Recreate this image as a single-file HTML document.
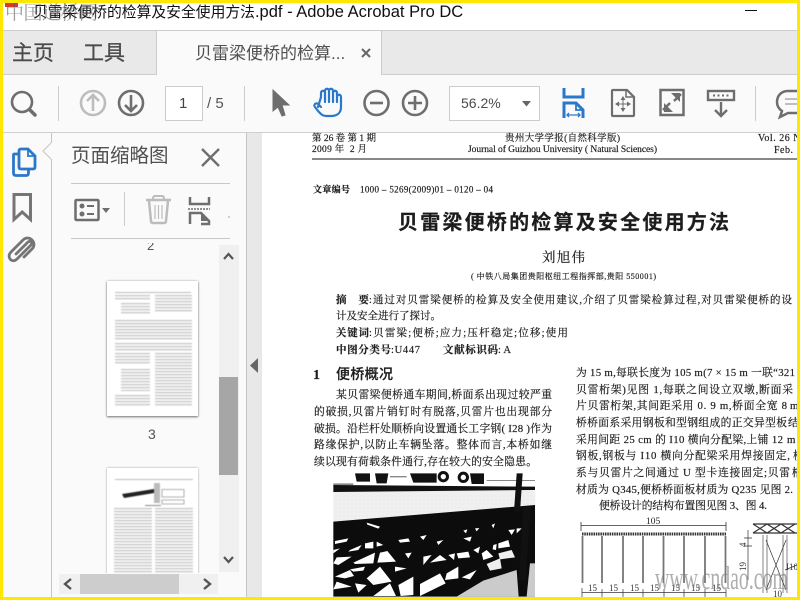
<!DOCTYPE html>
<html lang="zh"><head><meta charset="utf-8"><title>贝雷梁便桥的检算及安全使用方法.pdf - Adobe Acrobat Pro DC</title>
<style>
html,body{margin:0;padding:0}
body{width:800px;height:600px;overflow:hidden;position:relative;background:#fff;font-family:"Liberation Sans","Noto Sans CJK SC",sans-serif}
.a{position:absolute}
.t{position:absolute;white-space:nowrap;line-height:1}
svg{position:absolute;overflow:visible}
.g{fill:none;stroke:#6e6e6e;stroke-width:2.6}
.b{fill:none;stroke:#2b78c9;stroke-width:2.2}
.lines{position:absolute;opacity:.55;background:repeating-linear-gradient(#8e8e8e 0 1px,#e2e2e2 1px 2px,#fff 2px 3px)}
.tb{position:absolute;left:0;top:0;width:91px;height:135px;filter:blur(.5px)}
.doc text{font-family:"Liberation Serif","Noto Serif CJK SC",serif;fill:#1c1c1c;stroke:#1c1c1c;stroke-width:.18}
.doc .s{font-family:"Liberation Sans","Noto Sans CJK SC",sans-serif;font-weight:700;stroke-width:.2}
</style></head><body>

<!-- title bar -->
<div class="t" style="left:33px;top:4px;font-size:16.5px;color:#111"><span style="font-size:14.8px">贝雷梁便桥的检算及安全使用方法</span>.pdf - Adobe Acrobat Pro DC</div>
<div class="a" style="left:745px;top:10px;width:12px;height:1px;background:#111"></div>
<div class="a" style="left:5px;top:3px;width:13px;height:4px;background:#d63a2c"></div>
<div class="t" style="left:5px;top:4px;font-size:19px;letter-spacing:-.5px;color:rgba(90,90,90,.6);font-family:'Liberation Serif','Noto Serif CJK SC',serif">中国道桥网</div>

<!-- tab bar -->
<div class="a" style="left:3px;top:30px;width:794px;height:45px;background:#e9e9e9;border-top:1px solid #cdcdcd;border-bottom:1px solid #cdcdcd;box-sizing:border-box"></div>
<div class="a" style="left:156px;top:31px;width:226px;height:44px;background:#fafafa;border-left:1px solid #cdcdcd;border-right:1px solid #cdcdcd;box-sizing:border-box"></div>
<div class="t" style="left:12px;top:43px;font-size:21px;color:#4b4b4b;-webkit-text-stroke:.3px #4b4b4b">主页</div>
<div class="t" style="left:83px;top:43px;font-size:21px;color:#4b4b4b;-webkit-text-stroke:.3px #4b4b4b">工具</div>
<div class="t" style="left:195px;top:45px;font-size:17px;color:#505050">贝雷梁便桥的检算...</div>
<svg style="left:361px;top:48px" width="10" height="10"><path d="M1 1L9 9M9 1L1 9" stroke="#666" stroke-width="2"/></svg>

<!-- toolbar -->
<div class="a" style="left:3px;top:75px;width:794px;height:57px;background:#fafafa"></div>
<div class="a" style="left:3px;top:132px;width:794px;height:1px;background:#cfcfcf"></div>
<svg style="left:0;top:75px" width="800" height="57">
 <circle class="g" cx="22" cy="27" r="10"/><path d="M29.500 34.500L35 40" stroke="#6e6e6e" stroke-width="3.500" stroke-linecap="round"/>
 <path d="M58.500 11V46M244.500 11V46M755.500 11V46" stroke="#ccc"/>
 <g fill="none" stroke="#bdbdbd" stroke-width="2.600"><circle cx="93" cy="28" r="12"/><path d="M93 36V21M87 26L93 20L99 26"/></g>
 <g class="g"><circle cx="131" cy="28" r="12"/><path d="M131 20V35M125 30L131 36L137 30"/></g>
 <path d="M273 15L273 36L278 32L282 41L285 40L282 30L289 30Z" fill="#6e6e6e" stroke="#6e6e6e"/>
 <path class="b" stroke-linejoin="round" stroke-linecap="round" d="M318 32L321 22V18C321 15 325 15 325 18V27M325 27V16C325 13 329 13 329 16V27M329 27V16C329 13 333 13 333 16V27M333 27V18C333 15 337 15 337 18V27M337 27V22C337 19 341 19 341 22V32C341 38 337 41 331 41H326C322 41 320 38 318 36L315 32C313 30 316 27 318 29L321 32"/>
 <g class="g"><circle cx="376.500" cy="28" r="12"/><path d="M370 28H383"/><circle cx="415" cy="28" r="12"/><path d="M408 28H422M415 21V35"/></g>
 <!-- fit width -->
 <g fill="none" stroke="#2b78c9" stroke-width="3"><path d="M564 13V22H583V13"/><path d="M564 43V28H576L583 35V43"/></g>
 <path d="M576 28V35H583" fill="none" stroke="#2b78c9" stroke-width="1.800"/>
 <path d="M567 40H580M569 38L567 40L569 42M578 38L580 40L578 42" stroke="#2b78c9" stroke-width="1.300" fill="none"/>
 <!-- move -->
 <path d="M613 15H627L634 22V40Q634 41 633 41H613Q612 41 612 40V16Q612 15 613 15Z" fill="none" stroke="#6e6e6e" stroke-width="2.200"/>
 <path d="M626 15V22H634" fill="none" stroke="#6e6e6e" stroke-width="1.500"/>
 <path d="M623 21L620.500 25H625.500ZM623 37L620.500 33H625.500ZM615 29L619 26.500V31.500ZM631 29L627 26.500V31.500Z" fill="#6e6e6e"/><path d="M623 24V34M618 29H628" stroke="#6e6e6e"/>
 <!-- fullscreen -->
 <rect x="660.500" y="15" width="23" height="25" fill="none" stroke="#6e6e6e" stroke-width="2.500"/>
 <path d="M663 35L670 28M681 19L674 26" stroke="#6e6e6e" stroke-width="2.500"/>
 <path d="M664 28V37H673ZM680 27V18H671Z" fill="#6e6e6e"/>
 <!-- read -->
 <rect x="708" y="16" width="26" height="9" fill="none" stroke="#6e6e6e" stroke-width="2.400"/>
 <path d="M713 20.500h2M717.500 20.500h2M722 20.500h2M726.500 20.500h2" stroke="#6e6e6e" stroke-width="2"/>
 <path d="M721 27V41M715 35L721 41L727 35" fill="none" stroke="#6e6e6e" stroke-width="2.400"/>
 <!-- comment -->
 <path d="M797 16H788C781 16 777 21 777 27C777 31 779 34 782 36L780 42L788 38H797" fill="none" stroke="#6e6e6e" stroke-width="2.500"/>
 <path d="M785 24H797M785 29H797" stroke="#aaa" stroke-width="1.600"/>
</svg>
<div class="a" style="left:165px;top:86px;width:38px;height:35px;box-sizing:border-box;background:#fff;border:1px solid #ccc"></div>
<div class="t" style="left:179px;top:96px;font-size:15px;color:#444">1</div>
<div class="t" style="left:207px;top:96px;font-size:15px;color:#555">/ 5</div>
<div class="a" style="left:449px;top:86px;width:91px;height:35px;box-sizing:border-box;background:#fff;border:1px solid #ccc"></div>
<div class="t" style="left:461px;top:96px;font-size:14px;color:#4b4b4b">56.2%</div>
<svg style="left:522px;top:101px" width="9" height="6"><path d="M0 0H9L4.500 5.500Z" fill="#666"/></svg>

<!-- left panel -->
<div class="a" style="left:3px;top:133px;width:243px;height:464px;background:#fafafa"></div>
<div class="a" style="left:51px;top:133px;width:1px;height:464px;background:#c4c4c4"></div>
<div class="a" style="left:246px;top:133px;width:1px;height:464px;background:#c4c4c4"></div>
<div class="a" style="left:247px;top:133px;width:15px;height:464px;background:#e8e8e8"></div>
<svg style="left:250px;top:358px" width="9" height="15"><path d="M8 0V15L0 7.500Z" fill="#666"/></svg>
<svg style="left:0;top:133px" width="250" height="130">
 <path d="M52 9L43 18L52 27" fill="#fafafa" stroke="#c4c4c4"/><path d="M52 10V26" stroke="#fafafa" stroke-width="2"/>
 <path d="M18 21H14.500Q13.500 21 13.500 22V40Q13.500 42.500 16 42.500H26Q28.500 42.500 28.500 40V37" fill="none" stroke="#2b78c9" stroke-width="2.800"/>
 <path d="M19 18Q19 16 21 16H28L35 23V34Q35 36 33 36H21Q19 36 19 34Z" fill="#fafafa" stroke="#2b78c9" stroke-width="2.800"/>
 <path d="M28 16V23H35" fill="none" stroke="#2b78c9" stroke-width="1.800"/>
 <path d="M14 61.500H30.500V86.500L22.200 79L14 86.500Z" fill="none" stroke="#757575" stroke-width="3"/>
 <path transform="translate(0 -133)" d="M16 254L28 242C30 240 33 243 31 245L17 259C12 264 6 257 11 252L23 240C29 234 38 243 32 249L24 257" fill="none" stroke="#757575" stroke-width="2.800" stroke-linecap="round"/>
 <path d="M202 16L219 33M219 16L202 33" stroke="#6e6e6e" stroke-width="2.400"/>
 <path d="M71 50.500H230M71 105.500H230" stroke="#c8c8c8"/>
 <path d="M124.500 59V93" stroke="#ccc"/>
 <rect x="75.500" y="67" width="23" height="20" rx="1" fill="none" stroke="#6e6e6e" stroke-width="2.500"/>
 <circle cx="82" cy="73" r="2.500" fill="#6e6e6e"/><circle cx="82" cy="81" r="2.500" fill="#6e6e6e"/>
 <path d="M87 73H94M87 81H94" stroke="#6e6e6e" stroke-width="2"/>
 <path d="M102 75H110L106 80Z" fill="#6e6e6e"/>
 <g fill="none" stroke="#bcbcbc"><path d="M146 67H171" stroke-width="2.500"/><path d="M153 66Q153 63 155 63H162Q164 63 164 66" stroke-width="2"/><path d="M149 68L151 88Q151 90 153 90H164Q166 90 166 88L168 68" stroke-width="2.500"/><path d="M155 72V86M158.500 72V86M162 72V86" stroke-width="1.200"/></g>
 <g fill="none" stroke="#6e6e6e" stroke-width="2.500"><path d="M190 64V71H209V64"/><path d="M190 91V80H201L209 88V91H201"/></g>
 <path d="M188 76H210" stroke="#6e6e6e" stroke-width="1.600" stroke-dasharray="2 1"/>
 <path d="M201 80V88H209" fill="#6e6e6e"/>
 <circle cx="229" cy="84" r=".8" fill="#999"/>
</svg>
<div class="t" style="left:71px;top:147px;font-size:19.500px;color:#505050">页面缩略图</div>

<!-- thumbnails -->
<div class="a" style="left:52px;top:239px;width:167px;height:334px;overflow:hidden">
 <div class="t" style="left:95px;top:0;font-size:13px;color:#555;height:13px;clip-path:inset(4px 0 0 0)">2</div>
 <div class="a" style="left:55px;top:42px;width:91px;height:135px;background:#fff;box-shadow:0 1px 2px #777,0 0 2px #bbb">
  <div class="tb">
  <div class="a" style="left:8px;top:11px;width:76px;height:1px;background:#bbb"></div>
  <div class="lines" style="left:8px;top:14px;width:35px;height:6px"></div>
  <div class="lines" style="left:14px;top:22px;width:29px;height:12px"></div>
  <div class="lines" style="left:48px;top:14px;width:37px;height:18px"></div>
  <div class="lines" style="left:8px;top:39px;width:77px;height:9px"></div>
  <div class="lines" style="left:8px;top:48px;width:77px;height:12px"></div>
  <div class="lines" style="left:8px;top:62px;width:77px;height:9px"></div>
  <div class="lines" style="left:8px;top:72px;width:35px;height:12px"></div>
  <div class="lines" style="left:48px;top:72px;width:37px;height:53px"></div>
  <div class="lines" style="left:14px;top:88px;width:29px;height:22px"></div>
  <div class="lines" style="left:8px;top:114px;width:35px;height:11px"></div>
  </div>
 </div>
 <div class="t" style="left:96px;top:188px;font-size:14px;color:#555">3</div>
 <div class="a" style="left:55px;top:229px;width:91px;height:135px;background:#fff;box-shadow:0 0 2px #999">
  <div class="tb">
  <svg style="left:0;top:0" width="91" height="40"><path d="M15 26L47 21L47 25L17 30Z" fill="#222"/><path d="M47 15H53V35H47Z" fill="#bbb"/><path d="M55 21.500H77V29H55ZM55 32H77V36H55Z" fill="none" stroke="#999" stroke-width=".8"/></svg>
  <div class="a" style="left:8px;top:11px;width:78px;height:1px;background:#bbb"></div>
  <div class="a" style="left:38px;top:37px;width:16px;height:1px;background:#888"></div>
  <div class="lines" style="left:7px;top:40px;width:38px;height:70px"></div>
  <div class="lines" style="left:48px;top:40px;width:38px;height:70px"></div>
  </div>
 </div>
</div>
<div class="a" style="left:219px;top:245px;width:20px;height:327px;background:#f0f0f0"></div>
<div class="a" style="left:219px;top:377px;width:19px;height:98px;background:#a6a6a6"></div>
<svg style="left:219px;top:245px" width="20" height="327"><path d="M5 14L9.500 9L14 14M5 312L9.500 317L14 312" fill="none" stroke="#555" stroke-width="2.200"/></svg>
<div class="a" style="left:59px;top:574px;width:159px;height:20px;background:#f0f0f0"></div>
<div class="a" style="left:80px;top:574px;width:99px;height:20px;background:#cdcdcd"></div>
<svg style="left:59px;top:574px" width="159" height="20"><path d="M12 5L6 10L12 15M145 5L151 10L145 15" fill="none" stroke="#555" stroke-width="2.400"/></svg>

<!-- document text -->
<svg class="doc" style="left:0;top:0" width="800" height="600">
 <g font-size="9.500">
 <text x="312" y="141" textLength="64">第 26 卷 第 1 期</text>
 <text x="312" y="152" textLength="55" xml:space="preserve">2009 年  2 月</text>
 <text x="505" y="141" textLength="115">贵州大学学报(自然科学版)</text>
 <text x="468" y="152" textLength="189">Journal of Guizhou University ( Natural Sciences)</text>
 <text x="758" y="141" font-size="10" letter-spacing=".5">Vol. 26 N</text>
 <text x="774" y="153" font-size="10" letter-spacing=".5">Feb.</text>
 </g>
 <path d="M312 159H797" stroke="#777" stroke-width="1.800"/>
 <text x="313" y="192.500" font-size="9" font-weight="700" textLength="37">文章编号</text>
 <text x="360" y="192.500" font-size="9" textLength="133">1000 – 5269(2009)01 – 0120 – 04</text>
 <text class="s" x="398" y="229" font-size="20" textLength="331">贝雷梁便桥的检算及安全使用方法</text>
 <text x="542" y="262" font-size="13.500" textLength="43">刘旭伟</text>
 <text x="471" y="279" font-size="8" textLength="185">( 中铁八局集团贵阳枢纽工程指挥部,贵阳 550001)</text>

 <g font-size="10.500">
 <text x="336" y="303" font-weight="700" textLength="33" xml:space="preserve">摘  要</text>
 <text x="369" y="303" textLength="423">:通过对贝雷梁便桥的检算及安全使用建议,介绍了贝雷梁检算过程,对贝雷梁便桥的设</text>
 <text x="336" y="319" textLength="105">计及安全进行了探讨。</text>
 <text x="336" y="336" font-weight="700" textLength="33">关键词</text>
 <text x="369" y="336" textLength="199">:贝雷梁;便桥;应力;压杆稳定;位移;使用</text>
 <text x="336" y="353" font-weight="700" textLength="55">中图分类号</text>
 <text x="391" y="353" textLength="29">:U447</text>
 <text x="443" y="353" font-weight="700" textLength="55">文献标识码</text>
 <text x="498" y="353" textLength="13">:A</text>
 </g>

 <text x="313" y="379" font-size="14" font-weight="700">1</text>
 <text class="s" x="336" y="379" font-size="14" textLength="57" style="font-weight:500">便桥概况</text>

 <g font-size="10.800">
 <text x="336" y="398" textLength="216">某贝雷梁便桥通车期间,桥面系出现过较严重</text>
 <text x="314" y="415" textLength="238">的破损,贝雷片销钉时有脱落,贝雷片也出现部分</text>
 <text x="314" y="432" textLength="238">破损。沿栏杆处顺桥向设置通长工字钢( I28 )作为</text>
 <text x="314" y="448" textLength="238">路缘保护,以防止车辆坠落。整体而言,本桥如继</text>
 <text x="314" y="465" textLength="223">续以现有荷载条件通行,存在较大的安全隐患。</text>

 <text x="576" y="376" textLength="219">为 15 m,每联长度为 105 m(7 × 15 m 一联“321</text>
 <text x="576" y="393" textLength="217">贝雷桁架)见图 1,每联之间设立双墩,断面采</text>
 <text x="576" y="409" textLength="211">片贝雷桁架,其间距采用 0. 9 m,桥面全宽 8</text>
 <text x="790" y="409">m</text>
 <text x="576" y="426" textLength="211">桥桥面系采用钢板和型钢组成的正交异型板</text>
 <text x="788" y="426">结</text>
 <text x="576" y="443" textLength="207">采用间距 25 cm 的 I10 横向分配梁,上铺 12</text>
 <text x="787" y="443">m</text>
 <text x="576" y="459" textLength="214">钢板,钢板与 I10 横向分配梁采用焊接固定,</text>
 <text x="793" y="459">桥</text>
 <text x="576" y="476" textLength="214">系与贝雷片之间通过 U 型卡连接固定;贝雷</text>
 <text x="792" y="476">桁</text>
 <text x="576" y="493" textLength="217">材质为 Q345,便桥桥面板材质为 Q235 见图 2.</text>
 <text x="599" y="509" textLength="168">便桥设计的结构布置图见图 3、图 4.</text>
 </g>
</svg>

<!-- photo -->
<svg style="left:333px;top:473px" width="203" height="124" viewBox="333 473 203 124">
 <defs><pattern id="sp" width="4" height="4" patternUnits="userSpaceOnUse"><rect width="4" height="4" fill="#f4f4f4"/><circle cx="1" cy="1" r=".45" fill="#777"/><circle cx="3" cy="3" r=".35" fill="#999"/></pattern>
 <pattern id="sp2" width="3" height="3" patternUnits="userSpaceOnUse"><rect width="3" height="3" fill="#ddd"/><circle cx="1" cy="1" r=".7" fill="#555"/></pattern></defs>
 <rect x="333" y="473" width="203" height="124" fill="#fff"/>
 <g transform="translate(330 470) scale(.33333)">
  <rect x="10" y="62" width="606" height="100" fill="url(#sp)"/>
  <path d="M75 10H120V35H80ZM135 10H175L170 40H140ZM240 10H320V38H250ZM420 10H462V42H425Z" fill="#111"/>
  <path d="M10 40H70V45H10ZM180 18H230V22H180ZM470 30H615V33H470Z" fill="#888"/>
  <circle cx="340" cy="20" r="17" fill="#111"/><circle cx="340" cy="20" r="8" fill="#fff"/>
  <circle cx="400" cy="22" r="17" fill="#111"/><circle cx="400" cy="22" r="8" fill="#fff"/>
  <path d="M10 45L615 50V60L10 66Z" fill="#111"/>
  <path d="M10 155L615 105V380H10Z" fill="#0c0c0c"/>
  <path d="M560 10H578L570 125H552Z" fill="#111"/>
  <path d="M580 110H602L587 330H566Z" fill="#111"/>
  <path d="M380 380L460 332L560 300L566 380ZM600 280L615 280V380H590Z" fill="url(#sp2)"/>
  <g fill="#fff">
   <path d="M110 158L150 170L145 176L112 164Z"/>
   <path d="M15 213L55 205L50 215L15 222Z"/><path d="M10 240L30 235L10 250Z"/>
   <path d="M60 240L95 225L85 240L55 245Z"/><path d="M105 220L130 215L130 235L105 235Z"/><path d="M140 215L160 225L140 230Z"/>
   <path d="M10 280L20 262L65 260L25 285Z"/><path d="M70 278L135 248L130 280L75 282Z"/>
   <path d="M150 248L172 243L198 275L142 278Z"/>
   <path d="M205 210L235 205L240 215L210 218Z"/>
   <path d="M195 290L230 295L195 305Z"/>
   <path d="M110 325L150 290L185 335L130 345Z"/>
   <path d="M15 320L60 300L72 318L45 325Z"/>
   <path d="M20 335L65 350L10 358Z"/>
   <path d="M130 378L180 340L198 378Z"/>
   <path d="M270 342L330 310L347 340L270 378Z"/>
   <path d="M280 260L305 255L280 285Z"/><path d="M300 278L350 270L330 255Z"/>
   <path d="M380 250L415 245L420 262L385 265Z"/>
   <path d="M350 310L385 290L385 325L345 330Z"/>
   <path d="M395 322L440 300L420 328Z"/>
   <path d="M505 220L535 210L540 230L505 235Z"/>
   <path d="M535 180L555 178L545 195Z"/><path d="M560 175L575 175L560 190Z"/>
   <path d="M485 165L495 160L490 175Z"/><path d="M400 182L412 178L408 190Z"/><path d="M435 175L448 174L440 184Z"/>
   <path d="M400 205L425 200L420 215Z"/>
   <path d="M270 200L290 195L280 210Z"/><path d="M320 215L340 210L325 225Z"/>
   <path d="M430 240L450 230L445 250Z"/><path d="M225 250L245 248L235 265Z"/>
   <path d="M205 345L250 320L250 375L212 378Z"/>
   <path d="M60 298L105 290L100 302L70 305Z"/>
   <path d="M455 250L470 240L490 260L460 270Z"/>
   <path d="M355 255L375 250L372 270Z"/>
   <path d="M490 225L500 222L498 240L488 238Z"/>
   <path d="M75 340L110 345L85 368Z"/>
  </g>
  <path d="M470 282L510 265L515 295L480 302Z" fill="url(#sp)"/>
  <path d="M505 250L545 240L555 262L510 268Z" fill="url(#sp)"/>
 </g>
</svg>

<!-- diagram -->
<svg style="left:570px;top:510px" width="227" height="87" viewBox="570 510 227 87">
 <g fill="none" stroke="#333">
  <path d="M581 525.500H726M581 522V531M726 522V531" stroke-width=".8"/>
  <path d="M582 534H726" stroke="#333" stroke-width="3" stroke-dasharray="1.500 .8"/>
  <path d="M582.500 536V583M602 536V583M623 536V583M643 536V583M663.500 536V583M684 536V583M705 536V583M725.500 536V583" stroke="#777" stroke-width="1.800"/>
  <path d="M582 588V597M602 589V597M623 589V597M643 589V597M664 589V597M684 589V597M705 589V597M726 589V597" stroke-width=".7"/>
  <path d="M582 592.500H726" stroke-width=".7"/>
  <path d="M753 524H797M753 533H797M753 524L767 533L781 524L795 533M753 533L767 524L781 533L795 524" stroke-width="1.200"/>
  <path d="M763 535V593M767 535V593M783 535V593M787 535V593" stroke="#777" stroke-width=".9"/>
  <path d="M766 540L786 590M786 540L766 590" stroke-width=".7"/>
  <path d="M748 530V580M744 538H752M744 546H752" stroke-width=".7"/>
  <path d="M785 570L797 565" stroke-width=".7"/>
 </g>
 <text x="646" y="524" font-size="9.500" font-family="'Liberation Serif',serif" fill="#222">105</text>
 <g font-size="9" font-family="'Liberation Serif',serif" fill="#333"><text x="588" y="591">15</text><text x="609" y="591">15</text><text x="630" y="591">15</text><text x="650" y="591">15</text><text x="671" y="591">15</text><text x="691" y="591">15</text><text x="712" y="591">15</text><text x="773" y="597">10</text><text x="786" y="570">I10</text>
 <text x="0" y="0" transform="translate(746,571) rotate(-90)">19</text><text x="0" y="0" transform="translate(746,547) rotate(-90)">4</text></g>
</svg>
<div class="t" style="left:655px;top:563px;font-size:33px;color:rgba(130,130,130,.65);transform:scaleX(.6);transform-origin:0 0;font-family:'Liberation Serif',serif">www.cndao.com</div>

<!-- yellow frame -->
<div class="a" style="left:0;top:0;width:800px;height:3px;background:#ffe800"></div>
<div class="a" style="left:0;top:597px;width:800px;height:3px;background:#ffe800"></div>
<div class="a" style="left:0;top:0;width:3px;height:600px;background:#ffe800"></div>
<div class="a" style="left:797px;top:0;width:3px;height:600px;background:#ffe800"></div>
</body></html>
